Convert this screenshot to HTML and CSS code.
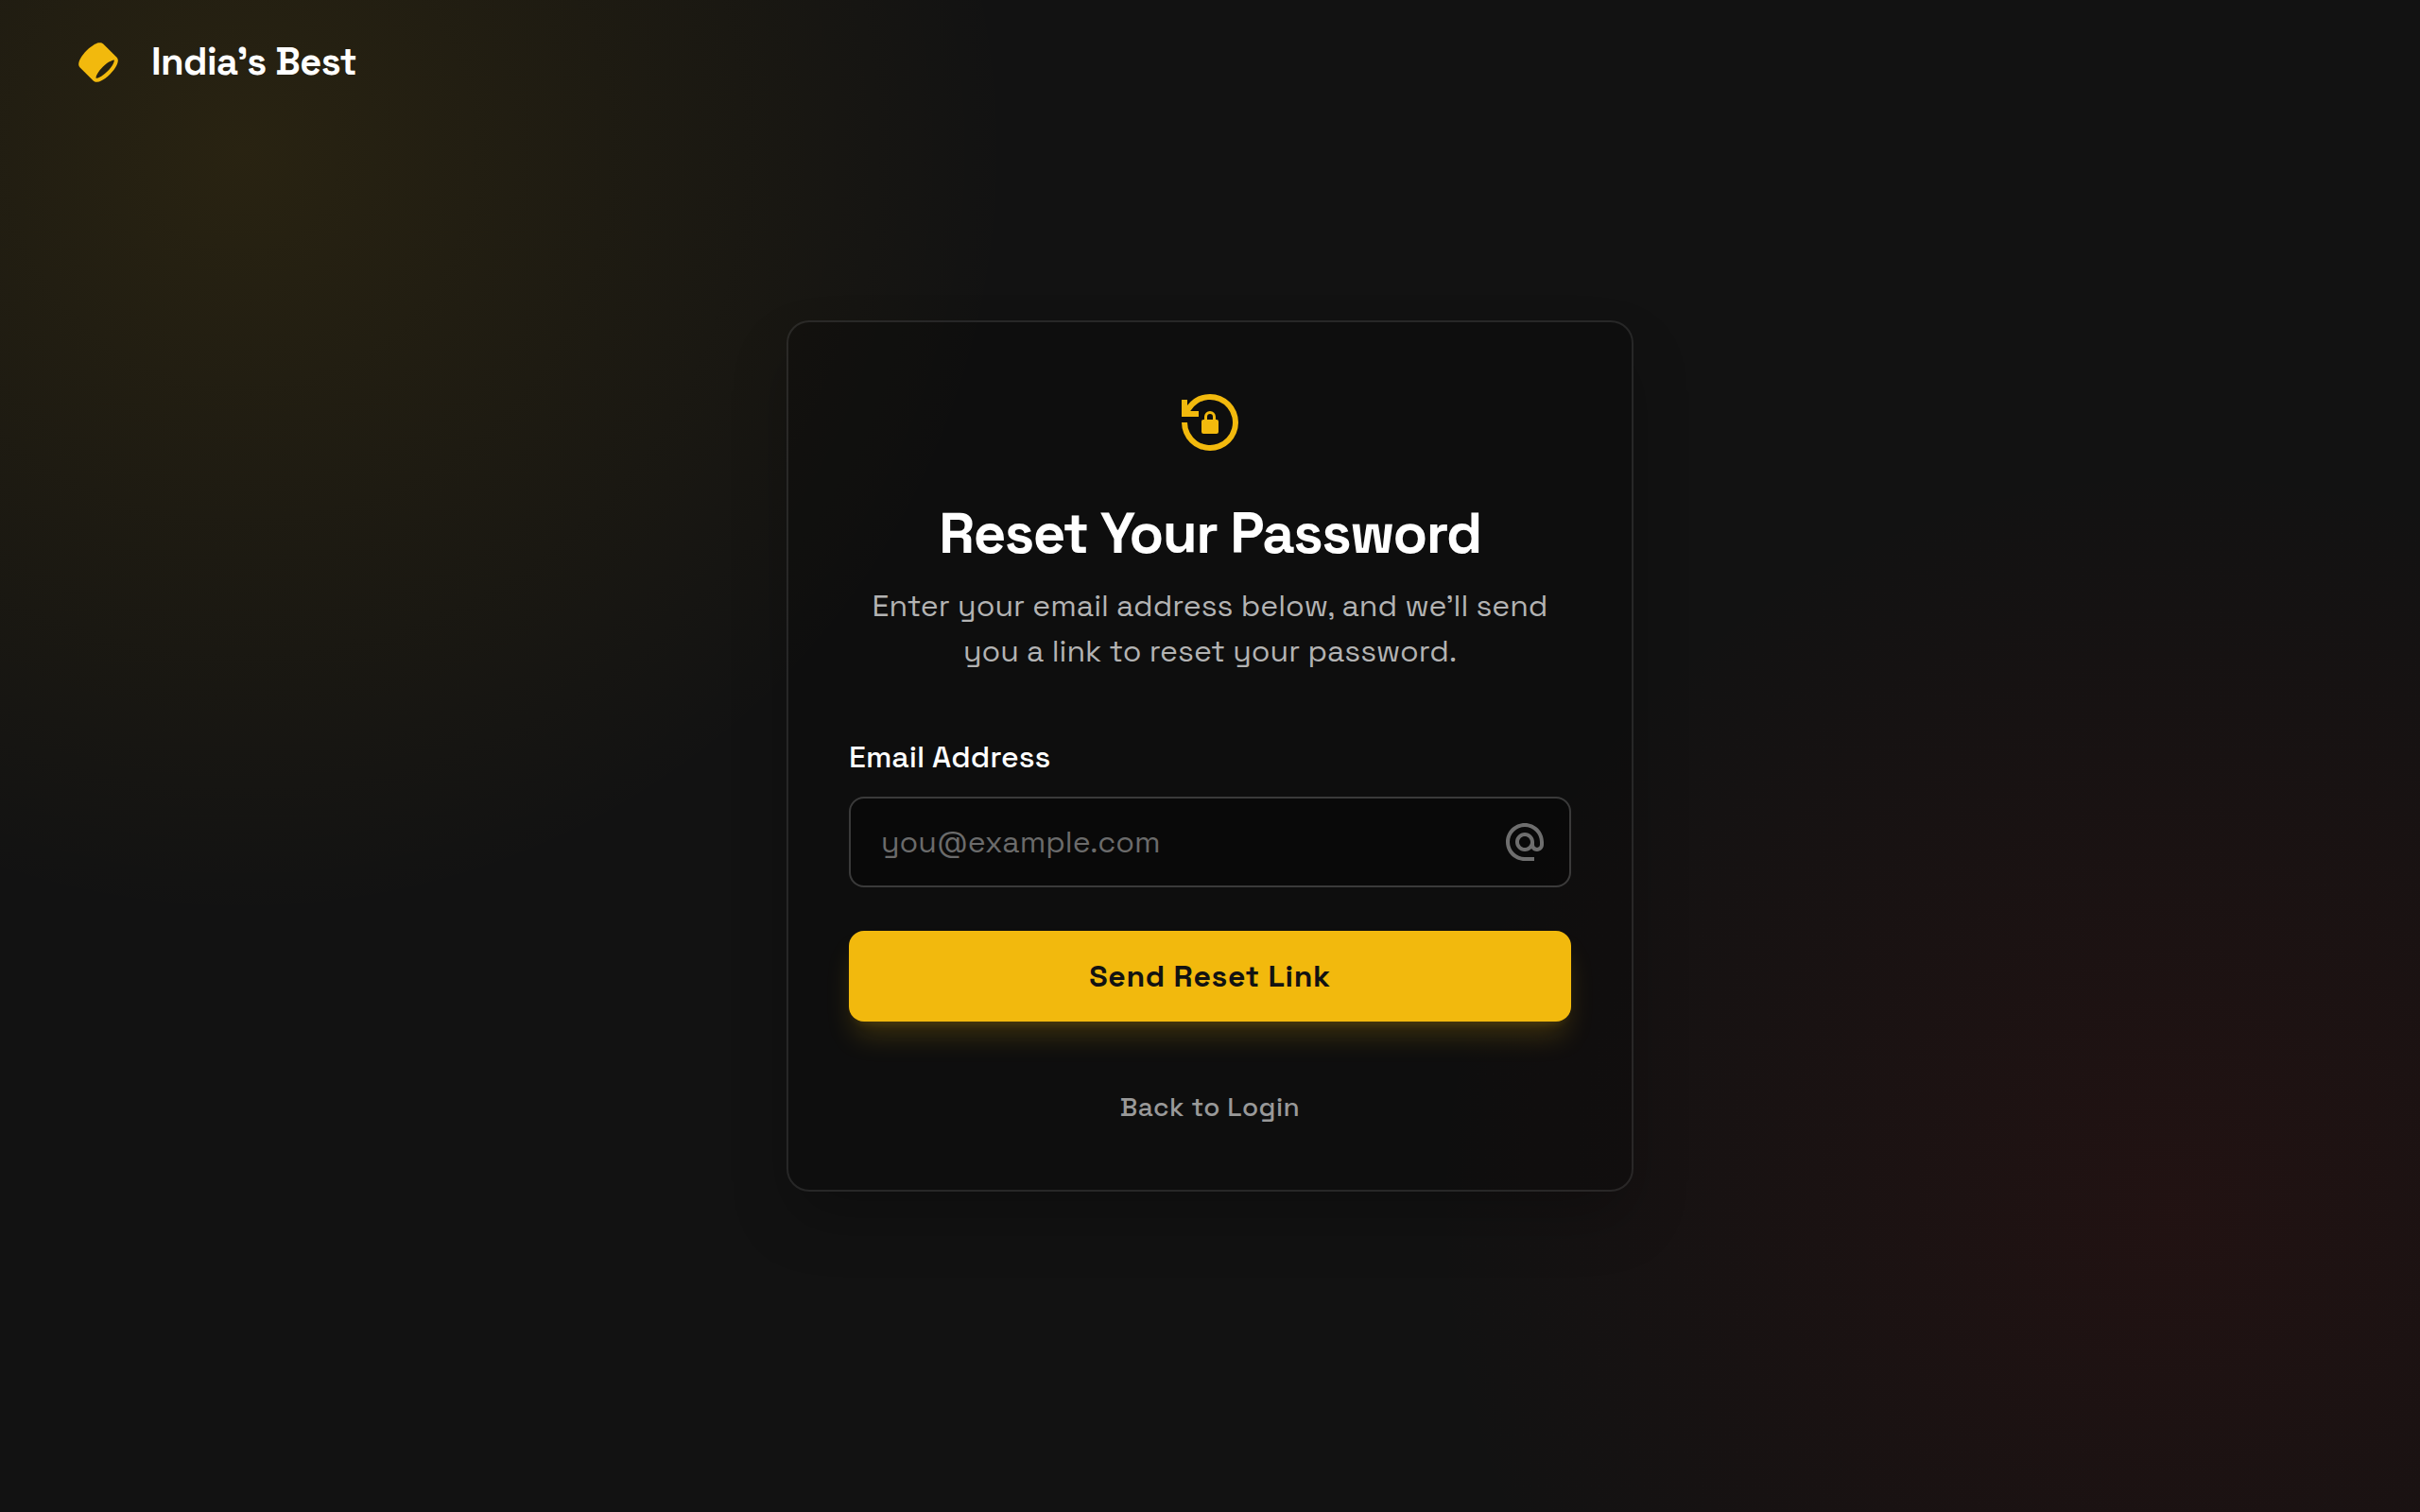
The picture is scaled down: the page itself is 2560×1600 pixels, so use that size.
FILE: index.html
```html
<!DOCTYPE html>
<html lang="en">
<head>
<meta charset="utf-8">
<meta name="viewport" content="width=device-width, initial-scale=1">
<title>Reset Your Password</title>
<link rel="stylesheet" href="styles.css">
</head>
<body>
<div class="page">
  <header class="header">
    <svg class="logo" viewBox="0 0 48 48" fill="currentColor" aria-hidden="true"><path fill-rule="evenodd" clip-rule="evenodd" d="M39.475 21.6262C40.358 21.4363 40.6863 21.5589 40.7581 21.5934C40.7876 21.655 40.8547 21.857 40.8082 22.3336C40.7408 23.0255 40.4502 24.0046 39.8572 25.2301C38.6799 27.6631 36.5085 30.6631 33.5858 33.5858C30.6631 36.5085 27.6632 38.6799 25.2301 39.8572C24.0046 40.4502 23.0255 40.7407 22.3336 40.8082C21.8571 40.8547 21.6551 40.7875 21.5934 40.7581C21.5589 40.6863 21.4363 40.358 21.6262 39.475C21.8562 38.4054 22.4689 36.9657 23.5038 35.2817C24.7575 33.2417 26.5497 30.9744 28.7621 28.762C30.9744 26.5497 33.2417 24.7574 35.2817 23.5037C36.9657 22.4689 38.4054 21.8562 39.475 21.6262ZM4.41189 29.2403L18.7597 43.5881C19.8813 44.7097 21.4027 44.9179 22.7217 44.7893C24.0585 44.659 25.5148 44.1631 26.9723 43.4579C29.9052 42.0387 33.2618 39.5667 36.4142 36.4142C39.5667 33.2618 42.0387 29.9052 43.4579 26.9723C44.1631 25.5148 44.659 24.0585 44.7893 22.7217C44.9179 21.4027 44.7097 19.8813 43.5881 18.7597L29.2403 4.41187C27.8527 3.02428 25.8765 3.02573 24.2861 3.36776C22.6081 3.72863 20.7334 4.58419 18.8396 5.74801C16.4978 7.18716 13.9881 9.18353 11.5858 11.5858C9.18354 13.988 7.18717 16.4978 5.74802 18.8396C4.58421 20.7334 3.72865 22.6081 3.36778 24.2861C3.02574 25.8765 3.02429 27.8527 4.41189 29.2403Z"/></svg>
    <span class="brand">India’s Best</span>
  </header>
  <main class="main">
    <section class="card">
      <svg class="card-icon" viewBox="0 0 24 24" fill="currentColor" aria-hidden="true"><path d="M12 2a10 10 0 1 1-10 10h2a8 8 0 1 0 1.072-4H8v2H2V4h2v2a9.98 9.98 0 0 1 8-4Z"/><path fill-rule="evenodd" d="M12 8a2 2 0 0 1 2 2v1h.3a.7.7 0 0 1 .7.7v3.6a.7.7 0 0 1-.7.7H9.700a.7.7 0 0 1-.7-.7v-3.600a.7.7 0 0 1 .7-.7h.3v-1a2 2 0 0 1 2-2Zm0 1a1 1 0 0 0-1 1v1h2v-1a1 1 0 0 0-1-1Z"/></svg>
      <h1 class="title">Reset Your Password</h1>
      <p class="intro">Enter your email address below, and we’ll send you a link to reset your password.</p>
      <form class="form">
        <label class="label" for="email">Email Address</label>
        <div class="field">
          <input class="input" id="email" type="email" placeholder="you@example.com">
          <svg class="at" viewBox="0 0 24 24" fill="currentColor" aria-hidden="true"><path d="M12 2C6.480 2 2 6.480 2 12s4.480 10 10 10h5v-2h-5c-4.340 0-8-3.660-8-8s3.660-8 8-8 8 3.660 8 8v1.430c0 .79-.71 1.570-1.500 1.570s-1.500-.78-1.500-1.570V12c0-2.760-2.240-5-5-5s-5 2.240-5 5 2.240 5 5 5c1.380 0 2.640-.56 3.540-1.470.65.89 1.770 1.470 2.960 1.470 1.970 0 3.500-1.600 3.500-3.570V12c0-5.520-4.480-10-10-10Zm0 13c-1.660 0-3-1.340-3-3s1.340-3 3-3 3 1.340 3 3-1.340 3-3 3Z"/></svg>
        </div>
        <button class="submit" type="submit">Send Reset Link</button>
      </form>
      <a class="back" href="#">Back to Login</a>
    </section>
  </main>
</div>
</body>
</html>
```
FILE: styles.css
```css
* {
  box-sizing: border-box;
}

body {
  margin: 0;
  background: #121212;
  color: #fff;
  font-family: "Space Grotesk", Inter, sans-serif;
}

.page {
  display: grid;
  grid-template: 1fr / 1fr;
  min-height: 100vh;
  background:
    radial-gradient(circle at 10% 10%, rgba(242, 185, 13, 0.1), transparent 30%),
    radial-gradient(circle at 90% 80%, rgba(170, 20, 20, 0.1), transparent 30%);
}

.header,
.main {
  grid-area: 1 / 1;
}

.header {
  display: flex;
  align-items: center;
  align-self: start;
  gap: 32px;
  padding: 40px 80px;
}

.logo {
  width: 48px;
  height: 48px;
  color: #f2b90d;
}

.brand {
  font-size: 40px;
  font-weight: 700;
  letter-spacing: -0.015em;
  line-height: 52px;
}

.main {
  display: flex;
  align-items: center;
  justify-content: center;
  padding: 132px 32px;
}

.card {
  display: flex;
  flex-direction: column;
  align-items: center;
  width: 100%;
  max-width: 896px;
  padding: 64px;
  border: 2px solid rgba(255, 255, 255, 0.1);
  border-radius: 24px;
  background: rgba(0, 0, 0, 0.2);
  box-shadow: 0 32px 64px -8px rgba(0, 0, 0, 0.25);
  text-align: center;
}

.card-icon {
  width: 72px;
  height: 72px;
  margin: 6px 0 44px;
  color: #f2b90d;
}

.title {
  margin: 0 0 14px;
  font-size: 60px;
  font-weight: 700;
  letter-spacing: -0.025em;
  line-height: 76px;
}

.intro {
  margin: 0 0 64px;
  color: #b3b3b3;
  font-size: 32px;
  line-height: 48px;
}

.form {
  display: flex;
  flex-direction: column;
  width: 100%;
  margin-bottom: 66px;
}

.label {
  margin-bottom: 18px;
  font-size: 32px;
  font-weight: 500;
  line-height: 48px;
  text-align: left;
}

.field {
  display: grid;
  align-items: center;
  margin-bottom: 46px;
}

.input,
.at {
  grid-area: 1 / 1;
}

.input {
  width: 100%;
  height: 96px;
  padding: 0 88px 0 32px;
  border: 2px solid rgba(255, 255, 255, 0.2);
  border-radius: 16px;
  background: rgba(0, 0, 0, 0.3);
  color: #fff;
  font: inherit;
  font-size: 32px;
}

.input::placeholder {
  color: #6b6b6b;
}

.at {
  justify-self: end;
  width: 48px;
  height: 48px;
  margin-right: 25px;
  color: #6e6e6e;
  pointer-events: none;
}

.submit {
  height: 96px;
  border: 0;
  border-radius: 16px;
  background: #f2b90d;
  box-shadow:
    0 20px 30px -6px rgba(242, 185, 13, 0.2),
    0 8px 12px -8px rgba(242, 185, 13, 0.2);
  color: #121212;
  font: inherit;
  font-size: 32px;
  font-weight: 700;
  letter-spacing: 0.02em;
}

.back {
  color: #999;
  font-size: 28px;
  font-weight: 500;
  letter-spacing: 0.015em;
  line-height: 48px;
  text-decoration: none;
}
```
